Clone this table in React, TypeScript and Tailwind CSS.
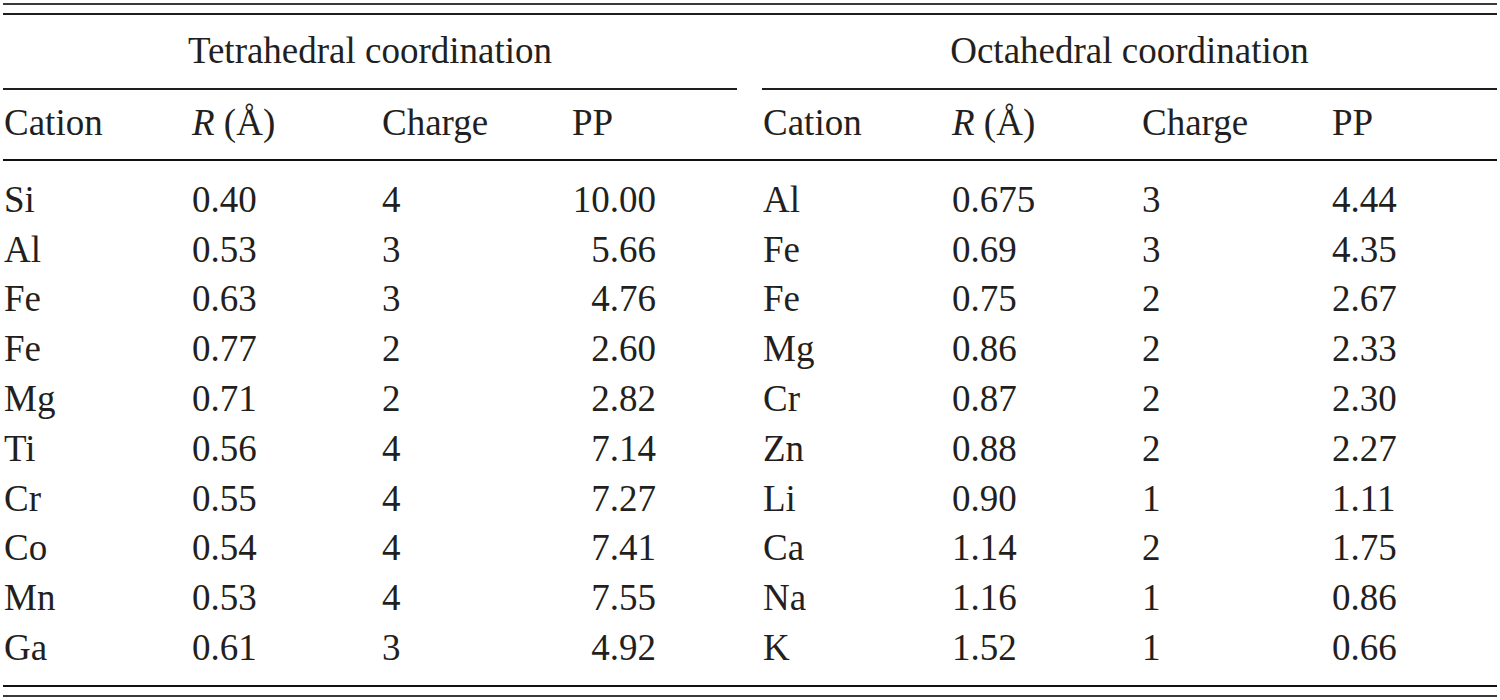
import React from "react";

const left = [
  ["Si", "0.40", "4", "10.00"],
  ["Al", "0.53", "3", "5.66"],
  ["Fe", "0.63", "3", "4.76"],
  ["Fe", "0.77", "2", "2.60"],
  ["Mg", "0.71", "2", "2.82"],
  ["Ti", "0.56", "4", "7.14"],
  ["Cr", "0.55", "4", "7.27"],
  ["Co", "0.54", "4", "7.41"],
  ["Mn", "0.53", "4", "7.55"],
  ["Ga", "0.61", "3", "4.92"],
];

const right = [
  ["Al", "0.675", "3", "4.44"],
  ["Fe", "0.69", "3", "4.35"],
  ["Fe", "0.75", "2", "2.67"],
  ["Mg", "0.86", "2", "2.33"],
  ["Cr", "0.87", "2", "2.30"],
  ["Zn", "0.88", "2", "2.27"],
  ["Li", "0.90", "1", "1.11"],
  ["Ca", "1.14", "2", "1.75"],
  ["Na", "1.16", "1", "0.86"],
  ["K", "1.52", "1", "0.66"],
];

function Head() {
  return (
    <>
      <div className="pl-[1px]">Cation</div>
      <div>
        <span className="italic">R</span> (Å)
      </div>
      <div>Charge</div>
      <div>PP</div>
    </>
  );
}

export default function App() {
  return (
    <div
      className="w-[1500px] h-[700px] bg-white text-[#231f20] text-[37px]"
      style={{ fontFamily: '"Liberation Serif", "Times New Roman", serif' }}
    >
      <div className="pl-[3px] pr-[3px] pt-[3px]">
        <div className="h-[1.5px] bg-[#3a3a3a]" />
        <div className="mt-[8px] h-[2px] bg-[#1e1e1e]" />
        <div className="grid grid-cols-[189px_190px_190px_165px_25px_190px_190px_190px_165px] leading-[49.8px]">
          <div className="col-span-4 pt-[11px] pb-[12.5px] border-b-2 border-[#1e1e1e] text-center">
            Tetrahedral coordination
          </div>
          <div />
          <div className="col-span-4 pt-[11px] pb-[12.5px] border-b-2 border-[#1e1e1e] text-center">
            Octahedral coordination
          </div>
          <div className="col-span-9 h-[8.6px]" />
          <Head />
          <div />
          <Head />
          <div className="col-span-9 mt-[10.6px] h-[2px] bg-[#111]" />
          <div className="col-span-9 h-[14px]" />
          {left.map((l, i) => {
            const r = right[i];
            return (
              <React.Fragment key={i}>
                <div className="pl-[1px]">{l[0]}</div>
                <div>{l[1]}</div>
                <div>{l[2]}</div>
                <div className="pr-[81px] text-right">{l[3]}</div>
                <div />
                <div className="pl-[1px]">{r[0]}</div>
                <div>{r[1]}</div>
                <div>{r[2]}</div>
                <div>{r[3]}</div>
              </React.Fragment>
            );
          })}
        </div>
        <div className="mt-[12px] h-[2px] bg-[#111]" />
        <div className="mt-[8px] h-[2px] bg-[#3a3a3a]" />
      </div>
    </div>
  );
}
